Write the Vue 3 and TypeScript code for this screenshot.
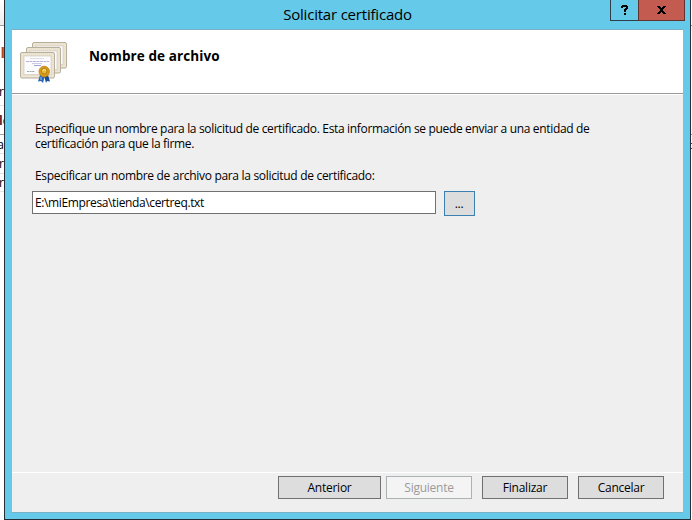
<script setup lang="ts">
import { ref } from 'vue'

interface Fragment {
  text: string
  height: number
  kind: string
}

const fileName = ref<string>('E:\\miEmpresa\\tienda\\certreq.txt')

const fragments: Fragment[] = [
  { text: '', height: 26, kind: 'bar' },
  { text: 'l', height: 54, kind: 'heading' },
  { text: 'r', height: 26, kind: 'ruled' },
  { text: 'lo', height: 29, kind: 'bold' },
  { text: 'a', height: 19, kind: 'ruled' },
  { text: 'r', height: 20, kind: 'ruled' },
  { text: 'r', height: 18, kind: 'ruled' },
]

const actions = [
  { label: 'Anterior', kind: 'previous', disabled: false },
  { label: 'Siguiente', kind: 'next', disabled: true },
  { label: 'Finalizar', kind: 'finish', disabled: false },
  { label: 'Cancelar', kind: 'cancel', disabled: false },
]

const papers = [
  { x: 12.5, y: 0.5 },
  { x: 6.5, y: 5.5 },
  { x: 0.5, y: 10.5 },
]
</script>

<template>
  <div class="desktop">
    <div class="behind left">
      <div v-for="(f, i) in fragments" :key="i" class="fragment" :class="f.kind" :style="{ height: f.height + 'px' }">
        <span>{{ f.text }}</span>
      </div>
    </div>

    <section class="dialog">
      <header class="titlebar">
        <h1>Solicitar certificado</h1>
        <div class="controls">
          <button class="help" aria-label="Ayuda">
            <svg width="7" height="10" viewBox="0 0 7 10"><path d="M0 1h1V0h5v1h1v3H6v1H5v2H3V4h1V3h1V2H2v1H0zM3 8h2v2H3z" /></svg>
          </button>
          <button class="close" aria-label="Cerrar">
            <svg width="9" height="8" viewBox="0 0 9 8"><path d="M0 0h3v1h1v1h1V1h1V0h3v1H8v1H7v1H6v2h1v1h1v1h1v1H6V7H5V6H4v1H3v1H0V7h1V6h1V5h1V3H2V2H1V1H0z" /></svg>
          </button>
        </div>
      </header>

      <main class="content">
        <div class="banner">
          <svg class="certificates" width="48" height="42" viewBox="0 0 48 42">
            <g v-for="p in papers" :key="p.x" :transform="`translate(${p.x} ${p.y})`">
              <rect width="34" height="25.5" rx="1.5" fill="#e8dfcc" stroke="#b8ae9c" />
              <rect x="1.5" y="1.5" width="31" height="22.5" fill="none" stroke="#f5eddd" stroke-dasharray="1 1" />
              <rect x="3.5" y="3.5" width="27" height="18.5" fill="#fcfcff" stroke="#d6cfc3" stroke-width=".8" />
            </g>
            <path d="M10 16.5h14" stroke="#dedee6" />
            <path d="M6 19.5h23" stroke="#b4b4da" stroke-dasharray="3 .5" />
            <path d="M12 21.5h10" stroke="#ccccE4" />
            <path d="M14 23.5h7" stroke="#a4a4d0" />
            <path d="M7 29.5h8" stroke="#9ba9a9" stroke-dasharray="2 .6" />
            <path d="M20 33l-2 6.5 3-.5 2 2 2-8z" fill="#2866b4" />
            <path d="M24 33l2 8 1-2 3 .5-2-6.5z" fill="#164d99" />
            <path d="M21 35v3" stroke="#75b6ed" stroke-width="1.3" />
            <circle cx="24.2" cy="29.5" r="5.2" fill="#d99b16" stroke="#c28a1a" />
            <circle cx="24.2" cy="29.2" r="2.8" fill="#e8ba38" stroke="#a87310" stroke-width=".8" />
            <path d="M22.5 28.5l2-1 1.5 1" stroke="#fff0a0" fill="none" />
          </svg>
          <h2>Nombre de archivo</h2>
        </div>

        <div class="form">
          <p class="intro">
            Especifique un nombre para la solicitud de certificado. Esta información se puede enviar a una entidad de certificación para que la firme.
          </p>
          <label for="request-file">Especificar un nombre de archivo para la solicitud de certificado:</label>
          <div class="picker">
            <input id="request-file" v-model="fileName" type="text" spellcheck="false" />
            <button class="btn browse">...</button>
          </div>
        </div>

        <footer>
          <button v-for="a in actions" :key="a.kind" class="btn" :class="a.kind" :disabled="a.disabled">{{ a.label }}</button>
        </footer>
      </main>
    </section>

    <div class="behind right">
      <i class="edge-one"></i><i class="edge-two"></i><i class="edge-three"></i>
    </div>
  </div>
</template>

<style>
body {
  margin: 0;
  overflow: hidden;
}
</style>

<style scoped>
* {
  box-sizing: border-box;
}
.desktop {
  display: grid;
  grid-template-columns: 4px 687px 1px;
  width: 692px;
  height: 520px;
  overflow: hidden;
  background: #fff;
  color: #000;
  font: 12px/15px "Open Sans", "Noto Sans", sans-serif;
}
.behind {
  overflow: hidden;
}
.fragment {
  display: flex;
  justify-content: flex-end;
  align-items: center;
  width: 4px;
  font-size: 12px;
  border-bottom: 1px solid #e3e3e3;
}
.ruled:nth-child(3) {
  padding-bottom: 3px;
}
.bar {
  background: linear-gradient(#fff, #ececec);
  border-color: #a0a0a0;
}
.heading {
  color: #b84a1c;
  font-size: 15px;
  font-weight: 700;
  border-color: #fff;
}
.heading span {
  margin-right: -1px;
}
.bold {
  justify-content: flex-start;
  font-weight: 700;
  color: #562029;
  border-color: #a0a0a0;
}
.bold span {
  margin-left: -1px;
}
.right {
  display: flex;
  flex-direction: column;
}
.right i {
  height: 1px;
}
.edge-one {
  margin-top: 25px;
  background: #999;
}
.edge-two {
  margin-top: 108px;
  background: #999;
}
.right .edge-three {
  height: 6px;
  margin-top: 8px;
  border: solid #174b82;
  border-width: 1px 0;
  background: #fff;
}
.dialog {
  display: flex;
  flex-direction: column;
  border: solid #252d36;
  border-width: 0 1px 1px;
  background: #65c9e9;
}
.titlebar {
  position: relative;
  height: 29px;
}
h1 {
  margin: 0;
  padding-top: 4px;
  text-align: center;
  font-size: 15px;
  font-weight: 400;
  line-height: 20px;
  letter-spacing: -0.2px;
}
.controls {
  position: absolute;
  top: 0;
  right: 5px;
  display: flex;
  height: 21px;
}
.controls button {
  display: flex;
  align-items: center;
  justify-content: center;
  padding: 0;
  border: 1px solid #2d3e48;
  border-top: 0;
}
.controls .help {
  width: 28px;
  border-right: 0;
  background: #65c9e9;
}
.controls .close {
  width: 47px;
  border-color: #61332f;
  background: #c45b50;
}
.content {
  display: flex;
  flex-direction: column;
  height: 484px;
  margin: 0 7px;
  border: solid #78b1c5;
  border-width: 1px 0;
  background: #efefef;
}
.banner {
  display: flex;
  height: 64px;
  padding: 12px 0 0 8px;
  border-bottom: 1px solid #999;
  background: #fff;
  box-shadow: 0 1px #fff;
}
h2 {
  margin: 5px 0 0 21px;
  font-size: 13.5px;
  line-height: 18px;
  font-weight: 700;
  letter-spacing: 0.1px;
}
.form {
  flex: 1;
  padding: 27px 20px 0;
  letter-spacing: -0.335px;
}
.intro {
  width: 570px;
  margin: 0 0 17px 3px;
}
label {
  display: block;
  margin-left: 3px;
  letter-spacing: -0.31px;
}
.picker {
  display: flex;
  align-items: flex-start;
  gap: 8px;
  margin-top: 8px;
}
input {
  width: 404px;
  height: 23px;
  padding: 0 2px 1px;
  border: 1px solid #707070;
  border-radius: 0;
  outline: 0;
  background: #fff;
  color: #000;
  font: inherit;
  letter-spacing: -0.37px;
}
.btn {
  width: 86px;
  height: 23px;
  padding: 0 0 1px;
  border: 1px solid #707070;
  border-radius: 0;
  background: #ddd;
  color: #000;
  font: inherit;
  letter-spacing: -0.25px;
}
.browse {
  width: 31px;
  height: 25px;
  padding: 0 1px 0 0;
  border-color: #3c7fb1;
}
footer {
  display: flex;
  height: 40px;
  padding: 3px 0 0 266px;
  border-top: 1px solid #fff;
}
.previous {
  width: 103px;
  margin-right: 5px;
}
.next {
  border-color: #adb2b5;
  background: #f4f4f4;
  color: #9b9b9b;
}
.finish {
  margin: 0 10px;
}
</style>
